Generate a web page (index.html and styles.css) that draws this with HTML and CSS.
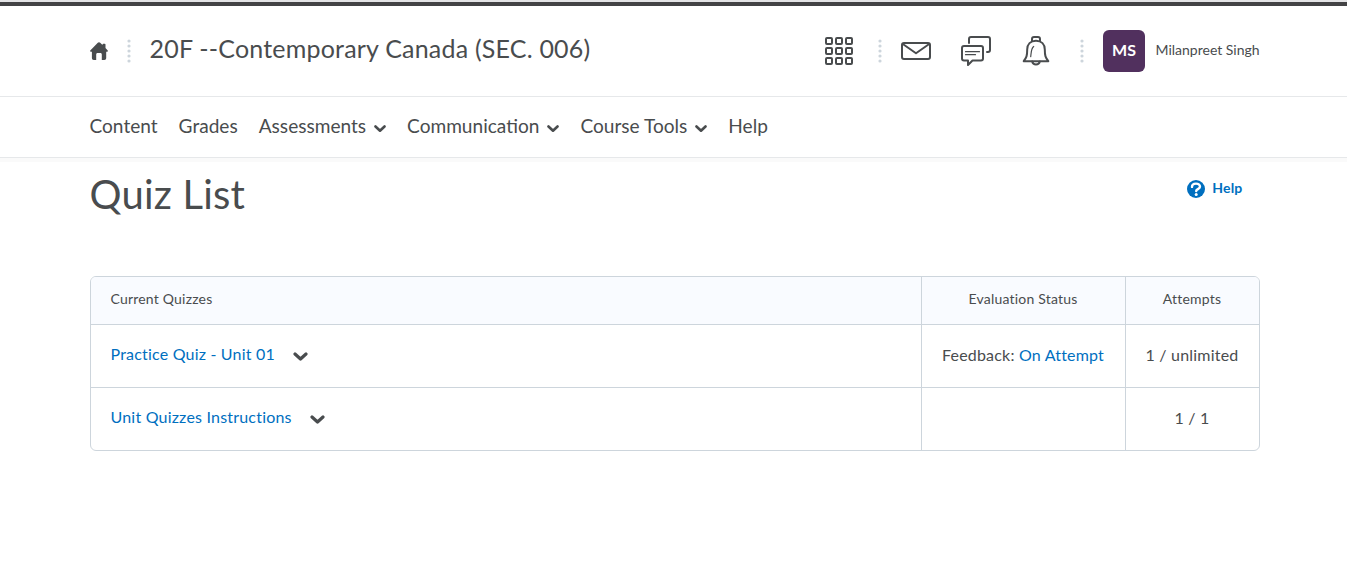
FILE: index.html
```html
<!DOCTYPE html>
<html lang="en">
<head>
<meta charset="utf-8">
<title>Quiz List</title>
<link rel="stylesheet" href="styles.css">
</head>
<body>
<div class="brand-bar"></div>
<header class="header">
  <svg class="home" viewBox="0 0 18 18"><path d="M9 .3c.5 0 .9.2 1.2.5L12.500 3V2.500c0-.5.4-.8.8-.8h1.400c.5 0 .8.300.8.8V6l2 2.200c.9.9.4 1.600-.5 1.600h-.8V16c0 1.200-.7 2-1.900 2h-2.500v-5.500c0-1-.6-1.500-1.400-1.500H7.600c-.8 0-1.400.5-1.400 1.500V18H3.800c-1.200 0-1.900-.8-1.900-2V9.800H1c-.9 0-1.400-.7-.5-1.600L7.800.8C8.100.5 8.500.3 9 .3z"/></svg>
  <svg class="dots" viewBox="0 0 4 24"><path d="M2 2v20.100"/></svg>
  <span class="course">20F --Contemporary Canada (SEC. 006)</span>
  <div class="tools">
    <svg class="icon grid" viewBox="0 0 30 30"><g><rect x="2" y="2" width="6" height="6" rx="1"/><rect x="12" y="2" width="6" height="6" rx="1"/><rect x="22" y="2" width="6" height="6" rx="1"/><rect x="2" y="12" width="6" height="6" rx="1"/><rect x="12" y="12" width="6" height="6" rx="1"/><rect x="22" y="12" width="6" height="6" rx="1"/><rect x="2" y="22" width="6" height="6" rx="1"/><rect x="12" y="22" width="6" height="6" rx="1"/><rect x="22" y="22" width="6" height="6" rx="1"/></g></svg>
    <svg class="dots" viewBox="0 0 4 24"><path d="M2 2v20.100"/></svg>
    <svg class="icon mail" viewBox="0 0 30 30"><rect x="1" y="7" width="28" height="16" rx="2"/><path d="M1.800 8L15 17.200 28.200 8"/></svg>
    <svg class="icon chat" viewBox="0 0 30 30"><path d="M8 7V3a2 2 0 0 1 2-2h17a2 2 0 0 1 2 2v11a2 2 0 0 1-2 2h-1"/><path d="M3 10h17a2 2 0 0 1 2 2v10.500a2 2 0 0 1-2 2h-8.500L7 29v-4.500H3a2 2 0 0 1-2-2V12a2 2 0 0 1 2-2z"/><path class="thin" d="M4.500 15.700h14M4.500 18.700h10"/></svg>
    <svg class="icon bell" viewBox="0 0 30 30"><path d="M11 4.800V3a2 2 0 0 1 2-2h4a2 2 0 0 1 2 2v1.800"/><path d="M15 4.700c-5.500 0-8.800 3.500-8.800 8.800C6.200 20 5.500 21.500 2.700 25.200h24.600c-2.800-3.700-3.500-5.200-3.500-11.700 0-5.300-3.300-8.800-8.800-8.800z"/><path d="M11.200 25.500a3.900 3.900 0 0 0 7.600 0"/><path class="thin" d="M12.700 10.500C10 12.300 10.300 16.500 9.700 20.700"/></svg>
    <svg class="dots" viewBox="0 0 4 24"><path d="M2 2v20.100"/></svg>
    <span class="avatar">MS</span>
    <span class="user">Milanpreet Singh</span>
  </div>
</header>
<nav class="nav">
  <span class="item">Content</span>
  <span class="item">Grades</span>
  <span class="item">Assessments<svg class="chev" viewBox="0 0 12 8"><path d="M1.500 1.500L6 5.700l4.500-4.200"/></svg></span>
  <span class="item">Communication<svg class="chev" viewBox="0 0 12 8"><path d="M1.500 1.500L6 5.700l4.500-4.200"/></svg></span>
  <span class="item">Course Tools<svg class="chev" viewBox="0 0 12 8"><path d="M1.500 1.500L6 5.700l4.500-4.200"/></svg></span>
  <span class="item">Help</span>
</nav>
<main class="main">
  <div class="heading">
    <h1 class="title">Quiz List</h1>
    <a class="help"><svg class="help-icon" viewBox="0 0 18 18"><circle cx="9" cy="9" r="9"/><path d="M5 6.900C5 4.700 6.700 3.600 9 3.600s4 1.200 4 3.200C13 9.200 9.200 9 9.200 11"/><circle class="point" cx="9.200" cy="14.500" r="1.500"/></svg><span class="help-text">Help</span></a>
  </div>
  <div class="table">
    <div class="row head"><div class="cell name">Current Quizzes</div><div class="cell">Evaluation Status</div><div class="cell">Attempts</div></div>
    <div class="row">
      <div class="cell name"><a class="link">Practice Quiz - Unit 01</a><svg class="chev big" viewBox="0 0 15 10"><path d="M2 2l5.500 5L13 2"/></svg></div>
      <div class="cell"><span>Feedback: <a class="link">On Attempt</a></span></div>
      <div class="cell">1 / unlimited</div>
    </div>
    <div class="row">
      <div class="cell name"><a class="link">Unit Quizzes Instructions</a><svg class="chev big" viewBox="0 0 15 10"><path d="M2 2l5.500 5L13 2"/></svg></div>
      <div class="cell"></div>
      <div class="cell">1 / 1</div>
    </div>
  </div>
</main>
</body>
</html>
```
FILE: styles.css
```css
* { box-sizing: border-box; }
body { margin: 0; background: #fff; color: #494c4e; font-family: Lato, sans-serif; overflow: hidden; }
svg { display: block; flex: none; }
.brand-bar { height: 6px; background: #434345; border-top: 2px solid #e4e4e6; }
.header { height: 91px; padding: 0 87px 0 90px; border-bottom: 1px solid #e6e8ea; display: flex; align-items: center; }
.home { width: 18px; height: 18px; fill: #494c4e; }
.dots { width: 4px; height: 24px; margin-left: 19px; fill: none; stroke: #cdd5dc; stroke-width: 3.200; stroke-linecap: round; stroke-dasharray: 0 5; }
.course { margin-left: 18.5px; font-size: 25px; line-height: 30px; padding-bottom: 6px; letter-spacing: .2px; white-space: nowrap; }
.tools { margin-left: auto; display: flex; align-items: center; }
.tools .dots { margin-left: 24px; }
.icon { width: 30px; height: 30px; fill: none; stroke: #494c4e; stroke-width: 2; stroke-linejoin: round; stroke-linecap: round; }
.thin { stroke-width: 1.200; }
.mail { margin-left: 19px; }
.chat { margin-left: 30px; }
.bell { margin-left: 30px; }
.tools .bell + .dots { margin-left: 29px; }
.avatar { width: 42px; height: 42px; margin-left: 19px; border-radius: 6px; background: #51305e; color: #fff; font-size: 16px; font-weight: 700; line-height: 40px; text-align: center; }
.user { width: 104.5px; margin-left: 10.5px; font-size: 14px; padding-bottom: 4px; white-space: nowrap; }
.nav { height: 65px; border-bottom: 4px solid #fafafa; box-shadow: inset 0 -1px #e6e8ea; padding: 0 89.5px; display: flex; align-items: center; gap: 21px; font-size: 19.08px; line-height: 24px; }
.item { display: flex; align-items: center; white-space: nowrap; padding-bottom: 3px; }
.chev { width: 12px; height: 8px; margin: 5px 0 0 8px; fill: none; stroke: #494c4e; stroke-width: 2.600; stroke-linecap: round; stroke-linejoin: round; }
.main { padding: 0 87px 0 90px; }
.heading { height: 114px; display: flex; justify-content: space-between; align-items: flex-start; }
.title { margin: 8px 0 0 -.5px; font-size: 40px; line-height: 48px; font-weight: 400; letter-spacing: .2px; }
.help { display: flex; align-items: center; margin: 16px 17.5px 0 0; color: #006fbf; font-size: 14px; line-height: 20px; font-weight: 700; letter-spacing: .2px; }
.help-text { padding-bottom: 2px; }
.help-icon { width: 18px; height: 18px; margin-right: 7px; fill: #006fbf; }
.help-icon path { fill: none; stroke: #fff; stroke-width: 2.400; stroke-linecap: round; }
.help-icon .point { fill: #fff; }
.table { width: 1170px; border: 1px solid #cdd5dc; border-radius: 6px; overflow: hidden; }
.row { display: grid; grid-template-columns: 830px 204px 134px; height: 63px; border-top: 1px solid #cdd5dc; font-size: 16px; letter-spacing: .2px; }
.cell { display: flex; align-items: center; justify-content: center; border-left: 1px solid #cdd5dc; white-space: nowrap; padding: 0 1px 4px 0; }
.name { justify-content: flex-start; border-left: 0; padding-left: 19.5px; padding-bottom: 6px; }
.head { height: 47px; border-top: 0; background: #f9fbff; font-size: 14px; }
.head .cell { padding-bottom: 4px; }
.link { color: #006fbf; }
.big { width: 15px; height: 10px; margin: 8px 0 0 18.5px; stroke-width: 3.200; }
```
